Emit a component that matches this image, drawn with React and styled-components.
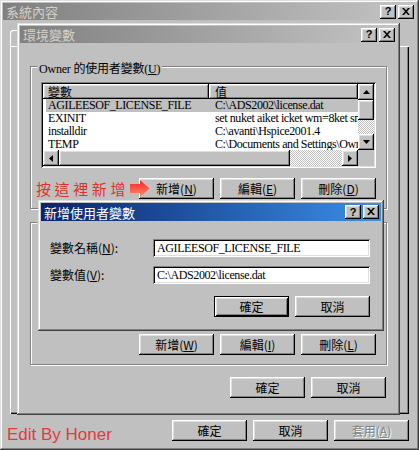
import React from 'react';
import styled, { createGlobalStyle, css } from 'styled-components';

const GlobalStyle = createGlobalStyle`
  html, body { margin: 0; padding: 0; background: #c0c0c0; }
  body {
    font-family: "Liberation Serif", "Noto Sans CJK TC", serif;
    font-size: 12px;
    color: #000;
  }
  * { box-sizing: border-box; }
`;

const raised = css`
  box-shadow: inset -1px -1px #000, inset 1px 1px #fff,
    inset -2px -2px #808080, inset 2px 2px #dfdfdf;
`;

const sunken = css`
  box-shadow: inset 1px 1px #808080, inset -1px -1px #fff,
    inset 2px 2px #000, inset -2px -2px #dfdfdf;
`;

const Desktop = styled.div`
  position: relative;
  width: 419px;
  height: 450px;
  overflow: hidden;
`;

const Win = styled.div`
  ${p => p.$floating && css`
    position: absolute;
    left: ${p.$left}px;
    top: ${p.$top}px;
    z-index: ${p.$z};
  `}
  width: ${p => p.$width}px;
  height: ${p => p.$height}px;
  padding: 3px;
  background: #c0c0c0;
  display: flex;
  flex-direction: column;
  box-shadow: inset -1px -1px #404040, inset 1px 1px #dfdfdf,
    inset -2px -2px #808080, inset 2px 2px #fff;
`;

const TitleBar = styled.div`
  flex: none;
  height: ${p => p.$h}px;
  display: flex;
  align-items: center;
  justify-content: space-between;
  padding: 0 2px 0 3px;
  background: ${p => p.$active
    ? 'linear-gradient(to right, #0a246a, #3b8fe8)'
    : 'linear-gradient(to right, #808080, #c4c4c4)'};
  color: ${p => (p.$active ? '#fff' : '#d4d0c8')};
  font-family: "Noto Sans CJK TC", sans-serif;
  font-size: 13px;
  line-height: 1;
`;

const Caps = styled.div`
  display: flex;
  gap: 2px;
`;

const CapButton = styled.div`
  width: 16px;
  height: 14px;
  background: #c0c0c0;
  ${raised}
  display: flex;
  align-items: center;
  justify-content: center;
  font: bold 11px "Liberation Sans", sans-serif;
  color: #000;
  padding-bottom: 1px;
`;

const TabHost = styled.div`
  margin: 8px 7px 0;
  display: flex;
  flex-direction: column;
`;

const Tabs = styled.div`
  height: 18px;
  display: flex;
  align-items: flex-end;
`;

const Tab = styled.div`
  width: 56px;
  height: 16px;
  border-radius: 3px 3px 0 0;
  box-shadow: inset 1px 1px #fff, inset -1px 0 #000, inset -2px 0 #808080;
  font-family: "Noto Sans CJK TC", sans-serif;
  text-align: center;
  line-height: 16px;
`;

const TabPage = styled.div`
  height: 368px;
  box-shadow: inset 1px 1px #fff, inset -1px -1px #000, inset -2px -2px #808080;
`;

const Footer = styled.div`
  margin-top: 6px;
  display: flex;
  justify-content: space-between;
  align-items: flex-start;
  padding: 0 7px 0 4px;
`;

const Signature = styled.div`
  margin-top: 5px;
  font: 17px/20px "Liberation Sans", sans-serif;
  color: #e23b3b;
`;

const EnvBody = styled.div`
  flex: 1;
  display: flex;
  flex-direction: column;
  padding: 23px 10px 0;
`;

const GroupBox = styled.div`
  position: relative;
  margin-top: ${p => p.$mt}px;
  border: 1px solid #808080;
  box-shadow: inset 1px 1px #fff, 1px 1px #fff;
  padding: 15px 10px 9px;
  display: flex;
  flex-direction: column;
  gap: 10px;
`;

const Legend = styled.span`
  position: absolute;
  top: -5px;
  left: 6px;
  padding: 0 2px;
  background: #c0c0c0;
  line-height: 15px;
  letter-spacing: -0.2px;
`;

const ListView = styled.div`
  width: 335px;
  height: 86px;
  padding: 2px;
  background: #fff;
  ${sunken}
  display: grid;
  grid-template-columns: 1fr 16px;
  grid-template-rows: 1fr 16px;
`;

const ListContent = styled.div`
  overflow: hidden;
  background: #fff;
`;

const Header = styled.div`
  display: grid;
  grid-template-columns: 166px 1fr;
  height: 15px;
`;

const HeaderCell = styled.div`
  background: #c0c0c0;
  ${raised}
  padding-left: ${p => p.$pad}px;
  line-height: 15px;
  font-family: "Noto Sans CJK TC", sans-serif;
`;

const Row = styled.div`
  display: grid;
  grid-template-columns: 163px 1fr;
  height: 13px;
  margin-left: 3px;
  background: ${p => (p.$selected ? '#c0c0c0' : 'transparent')};
`;

const Cell = styled.div`
  padding-left: ${p => p.$pad}px;
  line-height: 13px;
  white-space: nowrap;
  overflow: hidden;
  letter-spacing: -0.4px;
`;

const VScroll = styled.div`
  display: flex;
  flex-direction: column;
`;

const HScroll = styled.div`
  display: flex;
`;

const ScrollButton = styled.div`
  flex: none;
  width: 16px;
  height: 16px;
  background: #c0c0c0;
  ${raised}
  display: flex;
  align-items: center;
  justify-content: center;
`;

const Thumb = styled.div`
  flex: none;
  ${p => (p.$vertical ? 'height' : 'width')}: ${p => p.$size}px;
  background: #c0c0c0;
  ${raised}
`;

const Track = styled.div`
  flex: 1;
  background: repeating-conic-gradient(#fff 0 25%, #c0c0c0 0 50%) 0 0 / 2px 2px;
`;

const Corner = styled.div`
  background: #c0c0c0;
`;

const ButtonRow = styled.div`
  height: 21px;
  display: flex;
  justify-content: flex-end;
  align-items: center;
  gap: 6px;
  margin-top: ${p => p.$mt || 0}px;
  padding-right: ${p => p.$pr || 0}px;
`;

const Button = styled.div`
  width: 75px;
  height: 21px;
  flex: none;
  background: #c0c0c0;
  ${raised}
  ${p => p.$default && css`
    box-shadow: inset 0 0 0 1px #000, inset 2px 2px #fff, inset -2px -2px #000,
      inset 3px 3px #dfdfdf, inset -3px -3px #808080;
  `}
  display: flex;
  align-items: center;
  justify-content: center;
  font-family: "Noto Sans CJK TC", sans-serif;
  font-size: 12px;
  line-height: 21px;
  color: ${p => (p.$disabled ? '#808080' : '#000')};
  text-shadow: ${p => (p.$disabled ? '1px 1px #fff' : 'none')};
  u { text-underline-offset: 1px; }
`;

const Annotation = styled.div`
  position: relative;
  z-index: 2;
  flex: none;
  height: 21px;
  display: flex;
  align-items: center;
  gap: 1px;
  margin-right: -17px;
  white-space: nowrap;
  color: #e2302a;
  font-family: "Noto Sans CJK TC", sans-serif;
  font-size: 15px;
  line-height: 21px;
  letter-spacing: 3.6px;
`;

const FormBody = styled.div`
  flex: 1;
  padding: 18px 11px 0 9px;
  display: flex;
  flex-direction: column;
  gap: 9px;
`;

const FieldRow = styled.div`
  display: grid;
  grid-template-columns: 103px 217px;
  align-items: center;
`;

const FieldLabel = styled.div`
  font-family: "Noto Sans CJK TC", sans-serif;
  font-size: 12px;
  line-height: 18px;
`;

const TextInput = styled.div`
  height: 18px;
  background: #fff;
  ${sunken}
  padding: 0 4px;
  line-height: 18px;
  white-space: nowrap;
  overflow: hidden;
  letter-spacing: -0.4px;
`;

const Tri = ({ dir }) => {
  const pts = {
    up: '0,4 7,4 3.5,0',
    down: '0,0 7,0 3.5,4',
    left: '4,0 4,7 0,3.5',
    right: '0,0 0,7 4,3.5',
  }[dir];
  const vertical = dir === 'up' || dir === 'down';
  return (
    <svg width={vertical ? 7 : 4} height={vertical ? 4 : 7}>
      <polygon points={pts} fill="#000" />
    </svg>
  );
};

const CloseGlyph = () => (
  <svg width="8" height="7" viewBox="0 0 8 7">
    <path d="M0 0h2l2 2.2L6 0h2L5 3.5 8 7H6L4 4.8 2 7H0l3-3.5z" fill="#000" />
  </svg>
);

const Arrow = () => (
  <svg width="20" height="17" viewBox="0 0 20 17">
    <defs>
      <linearGradient id="arr" x1="0" y1="0" x2="0" y2="1">
        <stop offset="0" stopColor="#ff2020" />
        <stop offset="1" stopColor="#ff9070" />
      </linearGradient>
    </defs>
    <polygon points="0,4 10,4 10,0 19.5,8.5 10,17 10,13 0,13" fill="url(#arr)" />
  </svg>
);

const TitleCaps = () => (
  <Caps>
    <CapButton>?</CapButton>
    <CapButton><CloseGlyph /></CapButton>
  </Caps>
);

const Label = ({ text, hot }) => (
  <span>{text}(<u>{hot}</u>)</span>
);

const List = ({ rows }) => (
  <ListView>
    <ListContent>
      <Header>
        <HeaderCell $pad={5}>變數</HeaderCell>
        <HeaderCell $pad={6}>值</HeaderCell>
      </Header>
      {rows.map((r, i) => (
        <Row key={i} $selected={i === 0}>
          <Cell $pad={2}>{r[0]}</Cell>
          <Cell $pad={6}>{r[1]}</Cell>
        </Row>
      ))}
    </ListContent>
    <VScroll>
      <ScrollButton><Tri dir="up" /></ScrollButton>
      <Thumb $vertical $size={20} />
      <Track />
      <ScrollButton><Tri dir="down" /></ScrollButton>
    </VScroll>
    <HScroll>
      <ScrollButton><Tri dir="left" /></ScrollButton>
      <Thumb $size={231} />
      <Track />
      <ScrollButton><Tri dir="right" /></ScrollButton>
    </HScroll>
    <Corner />
  </ListView>
);

const userVars = [
  ['AGILEESOF_LICENSE_FILE', 'C:\\ADS2002\\license.dat'],
  ['EXINIT', 'set nuket aiket icket wm=8ket sm=0'],
  ['installdir', 'C:\\avanti\\Hspice2001.4'],
  ['TEMP', 'C:\\Documents and Settings\\Owner\\Local Settings\\Temp'],
];

const systemVars = [
  ['ComSpec', 'C:\\WINDOWS\\system32\\cmd.exe'],
  ['NUMBER_OF_PROCESSORS', '1'],
  ['OS', 'Windows_NT'],
  ['Path', 'C:\\WINDOWS\\system32;C:\\WINDOWS'],
];

export default function App() {
  return (
    <>
      <GlobalStyle />
      <Desktop>
        <Win $width={419} $height={450}>
          <TitleBar $h={17}>
            <span>系統內容</span>
            <TitleCaps />
          </TitleBar>
          <TabHost>
            <Tabs><Tab>進階</Tab></Tabs>
            <TabPage />
          </TabHost>
          <Footer>
            <Signature>Edit By Honer</Signature>
            <ButtonRow>
              <Button>確定</Button>
              <Button>取消</Button>
              <Button $disabled><Label text="套用" hot="A" /></Button>
            </ButtonRow>
          </Footer>
        </Win>

        <Win $floating $left={17} $top={23} $width={383} $height={392} $z={2}>
          <TitleBar $h={17}>
            <span>環境變數</span>
            <TitleCaps />
          </TitleBar>
          <EnvBody>
            <GroupBox $mt={0}>
              <Legend>Owner 的使用者變數(<u>U</u>)</Legend>
              <List rows={userVars} />
              <ButtonRow>
                <Annotation>按這裡新增<Arrow /></Annotation>
                <Button><Label text="新增" hot="N" /></Button>
                <Button><Label text="編輯" hot="E" /></Button>
                <Button><Label text="刪除" hot="D" /></Button>
              </ButtonRow>
            </GroupBox>
            <GroupBox $mt={13}>
              <Legend>系統變數(<u>S</u>)</Legend>
              <List rows={systemVars} />
              <ButtonRow>
                <Button><Label text="新增" hot="W" /></Button>
                <Button><Label text="編輯" hot="I" /></Button>
                <Button><Label text="刪除" hot="L" /></Button>
              </ButtonRow>
            </GroupBox>
            <ButtonRow $mt={12} $pr={1}>
              <Button>確定</Button>
              <Button>取消</Button>
            </ButtonRow>
          </EnvBody>
        </Win>

        <Win $floating $left={38} $top={200} $width={346} $height={131} $z={3}>
          <TitleBar $h={18} $active>
            <span>新增使用者變數</span>
            <TitleCaps />
          </TitleBar>
          <FormBody>
            <FieldRow>
              <FieldLabel>變數名稱(<u>N</u>):</FieldLabel>
              <TextInput>AGILEESOF_LICENSE_FILE</TextInput>
            </FieldRow>
            <FieldRow>
              <FieldLabel>變數值(<u>V</u>):</FieldLabel>
              <TextInput>C:\ADS2002\license.dat</TextInput>
            </FieldRow>
            <ButtonRow $mt={3}>
              <Button $default>確定</Button>
              <Button>取消</Button>
            </ButtonRow>
          </FormBody>
        </Win>
      </Desktop>
    </>
  );
}
